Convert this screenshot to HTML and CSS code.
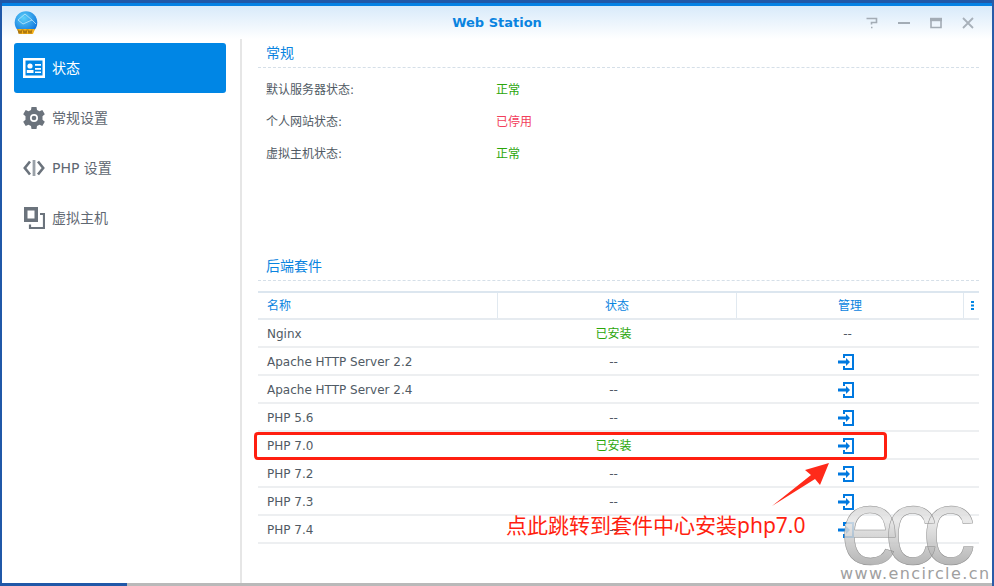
FILE: index.html
```html
<!DOCTYPE html>
<html lang="zh">
<head>
<meta charset="utf-8">
<title>Web Station</title>
<link rel="stylesheet" href="styles.css">
</head>
<body>
<div class="window">
  <header class="titlebar">
    <svg class="logo" viewBox="0 0 24 24" width="24" height="24">
      <defs>
        <radialGradient id="globe" cx="0.4" cy="0.3" r="0.8"><stop offset="0" stop-color="#5cd0fa"/><stop offset="1" stop-color="#0668d8"/></radialGradient>
      </defs>
      <circle cx="12" cy="11.500" r="11.300" fill="url(#globe)"/>
      <path d="M4 9 L11 3 L18 9 L9 13 Z M18 9 L22 13" fill="none" stroke="#cfeefd" stroke-width=".7"/>
      <path d="M3 18H21L19 23H5Z" fill="#f5b21c"/>
      <path d="M4 18.500 l1 4 1-3 1 3 1-4 M9 18.500 l1 4 1-3 1 3 1-4 M14 18.500 l1 4 1-3 1 3 1-4" fill="none" stroke="#8a5a08" stroke-width=".7"/>
    </svg>
    <h1 class="title">Web Station</h1>
    <div class="controls">
      <svg width="12" height="12" viewBox="0 0 12 12" class="ctl"><path d="M0.5 1.500H10.500V5.500H5.500V7.500M5 10.500h1.500" fill="none" stroke="#a3acb5" stroke-width="1.600"/></svg>
      <svg width="12" height="12" viewBox="0 0 12 12" class="ctl"><path d="M0 6H12" stroke="#a3acb5" stroke-width="2"/></svg>
      <svg width="12" height="12" viewBox="0 0 12 12" class="ctl"><path d="M1 2.500H11V10.500H1Z" fill="none" stroke="#a3acb5" stroke-width="1.600"/><path d="M0 2.500H12" stroke="#a3acb5" stroke-width="3.400"/></svg>
      <svg width="12" height="12" viewBox="0 0 12 12" class="ctl"><path d="M1 1L11 11M11 1L1 11" stroke="#a8b1ba" stroke-width="1.800"/></svg>
    </div>
  </header>
  <div class="body">
    <nav class="sidebar">
      <a class="nav-item active">
        <svg class="nav-icon" viewBox="0 0 22 20" width="22" height="20"><path fill-rule="evenodd" fill="#fff" d="M0 0H22V20H0ZM2.500 2.500V17.500H19.500V2.500Z"/><circle cx="7" cy="8" r="2.600" fill="#fff"/><path fill="#fff" d="M3.800 12H10.500V15H3.800ZM12 6H18V7.800H12ZM12 10H18V11.800H12ZM12 13.500H18V15H12Z"/></svg>
        <span>状态</span>
      </a>
      <a class="nav-item">
        <svg class="nav-icon" viewBox="0 0 22 22" width="22" height="22"><path fill="#6b737c" fill-rule="evenodd" d="M8.500 0H13.500L14 3L16.500 4.300L19.300 3L21.800 7.300L19.500 9.200V12.800L21.800 14.700L19.300 19L16.500 17.700L14 19L13.500 22H8.500L8 19L5.500 17.700L2.700 19L.2 14.700L2.500 12.800V9.200L.2 7.300L2.700 3L5.500 4.300L8 3ZM11 7A4 4 0 1 0 11.010 15A4 4 0 1 0 11 7Z"/><circle cx="11" cy="11" r="2.300" fill="#6b737c"/></svg>
        <span>常规设置</span>
      </a>
      <a class="nav-item">
        <svg class="nav-icon" viewBox="0 0 22 16" width="22" height="16"><path fill="none" stroke="#6b737c" stroke-width="2.600" d="M7 1.500L1.800 8L7 14.500M15 1.500L20.200 8L15 14.500"/><path stroke="#9aa1a8" stroke-width="2.800" d="M11 0V16"/></svg>
        <span>PHP 设置</span>
      </a>
      <a class="nav-item">
        <svg class="nav-icon" viewBox="0 0 22 22" width="22" height="22"><path fill="#6b737c" fill-rule="evenodd" d="M1 0H15V15H1ZM4.500 3.500V11.500H11.500V3.500Z"/><path fill="none" stroke="#6b737c" stroke-width="2.200" d="M17 7H21V21H7V17.500"/></svg>
        <span>虚拟主机</span>
      </a>
    </nav>
    <main class="content">
      <section class="section general">
        <h2 class="section-title">常规</h2>
        <dl class="status-list">
          <div class="status-row"><dt>默认服务器状态:</dt><dd class="ok">正常</dd></div>
          <div class="status-row"><dt>个人网站状态:</dt><dd class="off">已停用</dd></div>
          <div class="status-row"><dt>虚拟主机状态:</dt><dd class="ok">正常</dd></div>
        </dl>
      </section>
      <section class="section">
        <h2 class="section-title">后端套件</h2>
        <div class="table">
          <div class="row head">
            <div class="cell name">名称</div><div class="cell state">状态</div><div class="cell manage">管理</div>
            <div class="cell more"><svg width="3" height="9" viewBox="0 0 3 9"><path fill="#0086e5" d="M0 0H3V2H0ZM0 3.500H3V5.500H0ZM0 7H3V9H0Z"/></svg></div>
          </div>
          <div class="row"><div class="cell name">Nginx</div><div class="cell state ok">已安装</div><div class="cell manage">--</div></div>
          <div class="row"><div class="cell name">Apache HTTP Server 2.2</div><div class="cell state">--</div><div class="cell manage"><svg class="go" viewBox="0 0 16 16"><use href="#go"/></svg></div></div>
          <div class="row"><div class="cell name">Apache HTTP Server 2.4</div><div class="cell state">--</div><div class="cell manage"><svg class="go" viewBox="0 0 16 16"><use href="#go"/></svg></div></div>
          <div class="row"><div class="cell name">PHP 5.6</div><div class="cell state">--</div><div class="cell manage"><svg class="go" viewBox="0 0 16 16"><use href="#go"/></svg></div></div>
          <div class="row"><div class="cell name">PHP 7.0</div><div class="cell state ok">已安装</div><div class="cell manage"><svg class="go" viewBox="0 0 16 16"><use href="#go"/></svg></div></div>
          <div class="row"><div class="cell name">PHP 7.2</div><div class="cell state">--</div><div class="cell manage"><svg class="go" viewBox="0 0 16 16"><use href="#go"/></svg></div></div>
          <div class="row"><div class="cell name">PHP 7.3</div><div class="cell state">--</div><div class="cell manage"><svg class="go" viewBox="0 0 16 16"><use href="#go"/></svg></div></div>
          <div class="row"><div class="cell name">PHP 7.4</div><div class="cell state">--</div><div class="cell manage"><svg class="go" viewBox="0 0 16 16"><use href="#go"/></svg></div></div>
        </div>
      </section>
    </main>
  </div>
</div>
<svg class="defs" width="0" height="0">
  <symbol id="go" viewBox="0 0 16 16">
    <path fill="none" stroke="#0079e0" stroke-width="2" d="M6 4V1H15V15H6V12"/>
    <path fill="#0079e0" d="M0 6.500H8V4L12 8L8 12V9.500H0Z"/>
  </symbol>
</svg>
<div class="highlight"></div>
<svg class="arrow" width="64" height="52" viewBox="0 0 64 52"><path fill="#ff2a1a" d="M0 46L39 15L33 10L57 3L48 25L43 19Z"/></svg>
<div class="note">点此跳转到套件中心安装php7.0</div>
<div class="watermark">
  <svg class="ecc" width="150" height="68" viewBox="0 0 150 68">
    <defs><linearGradient id="wm" x1="0" y1="0" x2="0" y2="1"><stop offset="0" stop-color="#a8a8a8"/><stop offset=".45" stop-color="#e6e6e6"/><stop offset="1" stop-color="#8a8a8a"/></linearGradient></defs>
    <text x="0" y="64" class="ecc-text" fill="url(#wm)" stroke="#8c8c8c" stroke-width=".5" fill-opacity=".85">ecc</text>
  </svg>
  <div class="url">www.encircle.cn</div>
</div>
</body>
</html>
```
FILE: styles.css
```css
* { box-sizing: border-box; }
html, body { margin: 0; height: 100%; overflow: hidden; }
body {
  position: relative;
  width: 994px;
  height: 586px;
  background: linear-gradient(90deg, #2058a8 0, #2058a8 127px, #b9b9b9 127px, #b9b9b9 100%);
  font-family: "DejaVu Sans", "Noto Sans CJK SC", sans-serif;
  font-size: 12px;
  color: #505a64;
}
body::before {
  content: "";
  position: absolute;
  left: 0; right: 0; top: 0;
  height: 3px;
  background: #2058a8;
}
body::after {
  content: "";
  position: absolute;
  right: 0; top: 0; bottom: 0;
  width: 2px;
  background: #2a5ca8;
}
.window {
  position: absolute;
  left: 2px; top: 3px;
  width: 990px; height: 580px;
  background: #fff;
  border-top: 3px solid #0581e4;
  display: flex;
  flex-direction: column;
}
.titlebar {
  flex: none;
  height: 33px;
  display: flex;
  align-items: center;
  justify-content: center;
  position: relative;
  background: linear-gradient(#d8eafa, #fff);
}
.logo { position: absolute; left: 12px; top: 5px; }
.title { margin: 0; font-size: 13px; font-weight: 700; color: #0a84e0; }
.controls { position: absolute; right: 18px; top: 11px; display: flex; gap: 20px; }
.ctl { display: block; }
.body { flex: 1; display: flex; min-height: 0; }
.sidebar {
  flex: none;
  width: 240px;
  height: 100%;
  padding: 4px 0 0 12px;
  border-right: 2px solid #e6e6e6;
  display: flex;
  flex-direction: column;
}
.nav-item {
  width: 212px;
  height: 50px;
  display: flex;
  align-items: center;
  gap: 7px;
  padding-left: 9px;
  font-size: 14px;
  color: #5f6872;
}
.nav-item span { margin-top: -3px; }
.nav-item.active { background: #0086e5; color: #fff; border-radius: 3px; }
.nav-icon { flex: none; }
.content { flex: 1; padding: 0 13px 0 16px; min-width: 0; }
.section.general { height: 213px; }
.section-title {
  margin: 0;
  height: 29px;
  padding: 4px 0 0 8px;
  font-size: 14px;
  font-weight: 400;
  line-height: 20px;
  color: #0a84e0;
  border-bottom: 1px dashed #d5dfe8;
}
.status-list { margin: 4px 0 0; padding-left: 8px; }
.status-row { display: flex; height: 32px; align-items: center; font-size: 12px; }
.status-row dt { width: 230px; }
.status-row dd { margin: 0; }
.ok { color: #2ba60a; }
.off { color: #f2405c; }
.table { margin-top: 10px; border-top: 2px solid #dce6ef; }
.row {
  display: flex;
  height: 28px;
  align-items: center;
  border-bottom: 2px solid #edeff1;
}
.row.head { height: 27px; border-bottom-color: #e6ebf0; color: #0a84e0; }
.cell { height: 100%; display: flex; align-items: center; justify-content: center; flex: none; }
.name { width: 240px; justify-content: flex-start; padding: 2px 0 0 9px; }
.state { width: 239px; padding: 2px 8px 0 0; }
.manage { width: 227px; padding: 2px 6px 0 0; }
.state.ok { padding: 0 8px 2px 0; }
.more { width: 15px; }
.head .cell { border-right: 1px solid #e1e9f0; padding: 0 0 2px 0; }
.head .name { padding-left: 9px; }
.head .more { border-right: 0; padding: 0 0 0 2px; }
.go { width: 16px; height: 16px; display: block; margin-right: 3px; }
.defs { position: absolute; }
.highlight {
  position: absolute;
  left: 254px; top: 432px;
  width: 633px; height: 28px;
  border: 3px solid #ff1f10;
  border-radius: 4px;
}
.arrow { position: absolute; left: 772px; top: 460px; }
.note {
  position: absolute;
  left: 506px; top: 510px;
  font-family: "Noto Sans", "Noto Sans CJK SC", sans-serif;
  font-size: 21px;
  line-height: 30px;
  color: #ff1f10;
  white-space: nowrap;
}
.watermark { position: absolute; left: 840px; top: 500px; width: 152px; }
.ecc { display: block; }
.ecc-text { font-family: "Liberation Sans", sans-serif; font-size: 108px; letter-spacing: -16px; }
.url {
  font-family: "DejaVu Sans", sans-serif;
  font-size: 16px;
  line-height: 16px;
  color: #a0a0a0;
  letter-spacing: 1.4px;
  white-space: nowrap;
  margin-top: -2px;
}
```
